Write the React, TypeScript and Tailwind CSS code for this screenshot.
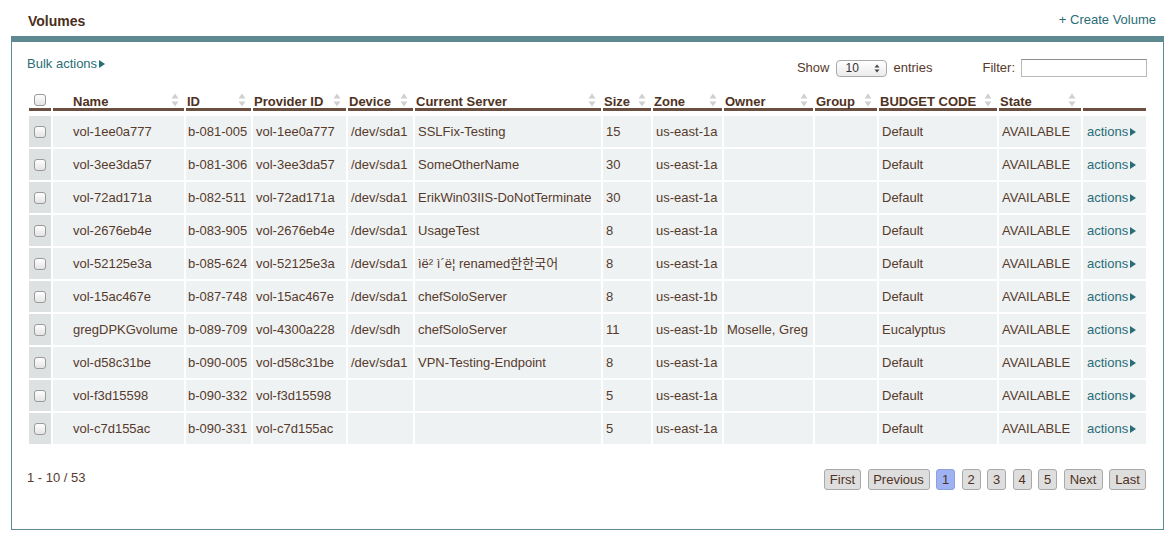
import React from 'react';

interface Volume {
  name: string;
  id: string;
  providerId: string;
  device: string;
  server: string;
  size: string;
  zone: string;
  owner: string;
  group: string;
  budget: string;
  state: string;
}

const volumes: Volume[] = [
  { name: 'vol-1ee0a777', id: 'b-081-005', providerId: 'vol-1ee0a777', device: '/dev/sda1', server: 'SSLFix-Testing', size: '15', zone: 'us-east-1a', owner: '', group: '', budget: 'Default', state: 'AVAILABLE' },
  { name: 'vol-3ee3da57', id: 'b-081-306', providerId: 'vol-3ee3da57', device: '/dev/sda1', server: 'SomeOtherName', size: '30', zone: 'us-east-1a', owner: '', group: '', budget: 'Default', state: 'AVAILABLE' },
  { name: 'vol-72ad171a', id: 'b-082-511', providerId: 'vol-72ad171a', device: '/dev/sda1', server: 'ErikWin03IIS-DoNotTerminate', size: '30', zone: 'us-east-1a', owner: '', group: '', budget: 'Default', state: 'AVAILABLE' },
  { name: 'vol-2676eb4e', id: 'b-083-905', providerId: 'vol-2676eb4e', device: '/dev/sda1', server: 'UsageTest', size: '8', zone: 'us-east-1a', owner: '', group: '', budget: 'Default', state: 'AVAILABLE' },
  { name: 'vol-52125e3a', id: 'b-085-624', providerId: 'vol-52125e3a', device: '/dev/sda1', server: 'ìë² ì´ë¦ renamed한한국어', size: '8', zone: 'us-east-1a', owner: '', group: '', budget: 'Default', state: 'AVAILABLE' },
  { name: 'vol-15ac467e', id: 'b-087-748', providerId: 'vol-15ac467e', device: '/dev/sda1', server: 'chefSoloServer', size: '8', zone: 'us-east-1b', owner: '', group: '', budget: 'Default', state: 'AVAILABLE' },
  { name: 'gregDPKGvolume', id: 'b-089-709', providerId: 'vol-4300a228', device: '/dev/sdh', server: 'chefSoloServer', size: '11', zone: 'us-east-1b', owner: 'Moselle, Greg', group: '', budget: 'Eucalyptus', state: 'AVAILABLE' },
  { name: 'vol-d58c31be', id: 'b-090-005', providerId: 'vol-d58c31be', device: '/dev/sda1', server: 'VPN-Testing-Endpoint', size: '8', zone: 'us-east-1a', owner: '', group: '', budget: 'Default', state: 'AVAILABLE' },
  { name: 'vol-f3d15598', id: 'b-090-332', providerId: 'vol-f3d15598', device: '', server: '', size: '5', zone: 'us-east-1a', owner: '', group: '', budget: 'Default', state: 'AVAILABLE' },
  { name: 'vol-c7d155ac', id: 'b-090-331', providerId: 'vol-c7d155ac', device: '', server: '', size: '5', zone: 'us-east-1a', owner: '', group: '', budget: 'Default', state: 'AVAILABLE' },
];

const headers = ['Name', 'ID', 'Provider ID', 'Device', 'Current Server', 'Size', 'Zone', 'Owner', 'Group', 'BUDGET CODE', 'State'];

const gridCols = 'grid grid-cols-[22px_131px_65px_93px_65px_186px_48px_69px_89px_62px_118px_82px_63px] gap-x-[2px]';

const Checkbox = () => (
  <span className="block w-[12px] h-[12px] rounded-[3px] border border-[#9a9a9a] bg-linear-to-b from-white to-[#e4e4e4]" />
);

const Arrow = () => (
  <svg width="6" height="8" viewBox="0 0 6 8" className="inline-block ml-[2px]">
    <polygon points="0,0 6,4 0,8" fill="#2a6d77" />
  </svg>
);

const SortIcon = () => (
  <svg width="8" height="14" viewBox="0 0 8 14" className="shrink-0 self-end mb-[1px]">
    <polygon points="0.5,5.5 4,0.5 7.5,5.5" fill="#d0d0d0" />
    <polygon points="0.5,8.5 4,13.5 7.5,8.5" fill="#d0d0d0" />
  </svg>
);

const PageButton = ({ label, w, active }: { label: string; w: string; active?: boolean }) => (
  <span
    className={
      active
        ? `flex items-center justify-center h-[21px] ${w} border border-[#8ea0d8] rounded-[3px] bg-[#9fb3f4] text-[#4e3223]`
        : `flex items-center justify-center h-[21px] ${w} border border-[#a9a9a9] rounded-[3px] bg-[#dedede] text-[#4e3223]`
    }
  >
    {label}
  </span>
);

export default function App() {
  return (
    <div className="w-[1171px] h-[534px] bg-white text-[13px] leading-[16px] text-[#573a2b] font-['Liberation_Sans','Noto_Sans_CJK_KR',Arial,sans-serif]">
      {/* page header */}
      <div className="flex justify-between pl-[28px] pr-[15px] pt-[12px] h-[36px]">
        <h1 className="text-[14px] font-bold text-[#4b2e20] mt-[1px]">Volumes</h1>
        <a className="text-[#2a6d77]">+ Create Volume</a>
      </div>

      {/* panel */}
      <div className="ml-[11px] w-[1153px] h-[494px] border border-[#5d8a91] border-t-[6px] pl-[15px] pr-[14px]">
        <div className="flex justify-between items-start pt-[14px]">
          <a className="text-[#2a6d77] flex items-center">
            Bulk actions
            <Arrow />
          </a>
          <div className="flex items-center mt-[3px] pr-[2px]">
            <span>Show</span>
            <span className="ml-[7px] flex items-center justify-between w-[51px] h-[17px] border border-[#a9a9a9] rounded-[4px] bg-linear-to-b from-white to-[#ebebeb] pl-[8px] pr-[6px] text-[12px] text-[#333]">
              10
              <svg width="6" height="9" viewBox="0 0 6 9">
                <polygon points="0.5,3.5 3,0.5 5.5,3.5" fill="#444" />
                <polygon points="0.5,5.5 3,8.5 5.5,5.5" fill="#444" />
              </svg>
            </span>
            <span className="ml-[6px]">entries</span>
            <span className="ml-[50px]">Filter:</span>
            <span className="ml-[6px] block w-[126px] h-[18px] border border-[#b9b9b9] border-t-[#8e8e8e] bg-white" />
          </div>
        </div>

        {/* table */}
        <div className="mt-[11px] w-[1121px] p-[2px]">
          <div className={`${gridCols} pb-[3px]`}>
            <div className="h-[21px] border-b-[3px] border-[#6b5041] flex items-end justify-center pb-[2px]">
              <Checkbox />
            </div>
            {headers.map((h, i) => (
              <div
                key={h}
                className={
                  i === 0
                    ? 'h-[21px] border-b-[3px] border-[#6b5041] flex items-end justify-between pl-[20px] pr-[5px] font-bold text-[#4e3223] whitespace-nowrap'
                    : 'h-[21px] border-b-[3px] border-[#6b5041] flex items-end justify-between pl-[1px] pr-[5px] font-bold text-[#4e3223] whitespace-nowrap'
                }
              >
                <span className="leading-[12px]">{h}</span>
                <SortIcon />
              </div>
            ))}
            <div className="h-[21px] border-b-[3px] border-[#6b5041]" />
          </div>

          {volumes.map((v, idx) => (
            <div key={idx} className={`${gridCols} mt-[2px] h-[31px]`}>
              <div className="bg-[#dde1e2] flex items-center justify-center">
                <Checkbox />
              </div>
              <div className="bg-[#eef2f3] flex items-center pl-[20px] whitespace-nowrap">{v.name}</div>
              <div className="bg-[#eef2f3] flex items-center px-[2px] whitespace-nowrap">{v.id}</div>
              <div className="bg-[#eef2f3] flex items-center px-[3px] whitespace-nowrap">{v.providerId}</div>
              <div className="bg-[#eef2f3] flex items-center px-[3px] whitespace-nowrap">{v.device}</div>
              <div className="bg-[#eef2f3] flex items-center px-[3px] whitespace-nowrap">{v.server}</div>
              <div className="bg-[#eef2f3] flex items-center px-[3px] whitespace-nowrap">{v.size}</div>
              <div className="bg-[#eef2f3] flex items-center px-[3px] whitespace-nowrap">{v.zone}</div>
              <div className="bg-[#eef2f3] flex items-center px-[3px] whitespace-nowrap">{v.owner}</div>
              <div className="bg-[#eef2f3] flex items-center px-[3px] whitespace-nowrap">{v.group}</div>
              <div className="bg-[#eef2f3] flex items-center px-[3px] whitespace-nowrap">{v.budget}</div>
              <div className="bg-[#eef2f3] flex items-center px-[3px] whitespace-nowrap">{v.state}</div>
              <div className="bg-[#eef2f3] flex items-center px-[4px] whitespace-nowrap">
                <a className="text-[#2a6d77] flex items-center">
                  actions
                  <Arrow />
                </a>
              </div>
            </div>
          ))}
        </div>

        {/* footer */}
        <div className="flex justify-between items-start mt-[23px] pr-[3px]">
          <span className="pt-[1px]">1 - 10 / 53</span>
          <div className="flex gap-[6.5px]">
            <PageButton label="First" w="w-[37px]" />
            <PageButton label="Previous" w="w-[62px]" />
            <PageButton label="1" w="w-[19px]" active />
            <PageButton label="2" w="w-[19px]" />
            <PageButton label="3" w="w-[19px]" />
            <PageButton label="4" w="w-[19px]" />
            <PageButton label="5" w="w-[19px]" />
            <PageButton label="Next" w="w-[39px]" />
            <PageButton label="Last" w="w-[37px]" />
          </div>
        </div>
      </div>
    </div>
  );
}
